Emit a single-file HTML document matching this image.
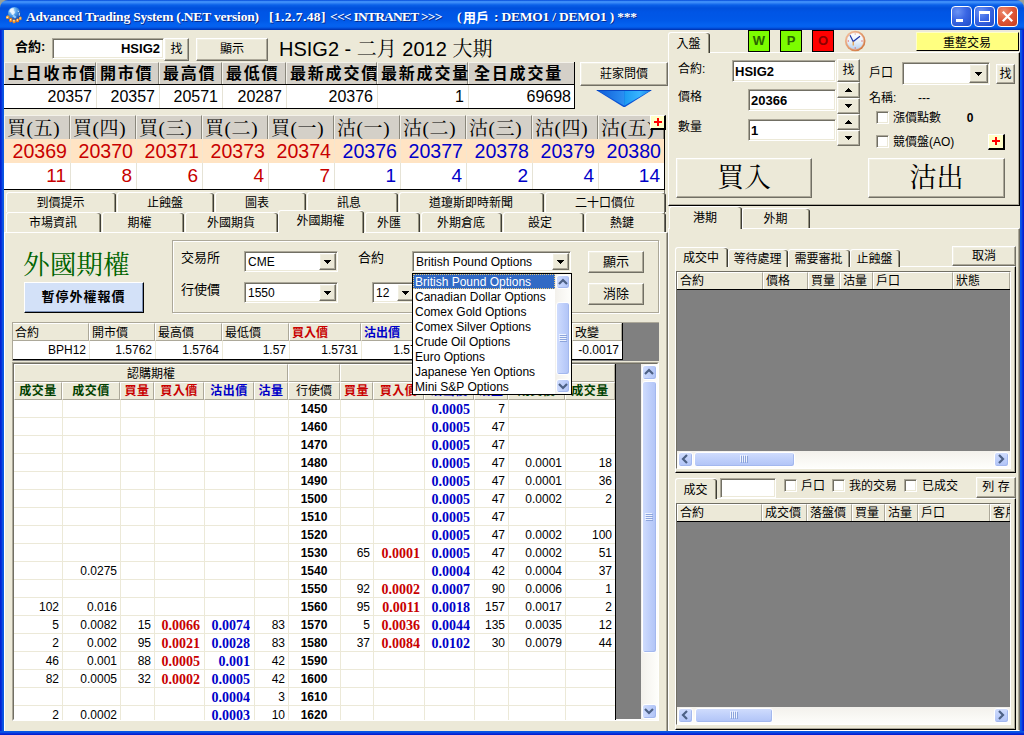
<!DOCTYPE html>
<html lang="zh-Hant"><head><meta charset="utf-8"><title>Advanced Trading System</title>
<style>
html,body{margin:0;padding:0;background:#98a098;}
body{width:1024px;height:735px;position:relative;overflow:hidden;font-family:"Liberation Sans","Noto Sans CJK TC",sans-serif;font-size:12px;color:#000;}
div{position:absolute;box-sizing:border-box;overflow:hidden;white-space:nowrap;}
.sf{font-family:"Liberation Serif","Noto Serif CJK SC",serif;}
.tt{overflow:visible}
</style></head>
<body>
<div class="tb" style="left:0px;top:0px;width:1024px;height:30px;background:linear-gradient(#0046d8 0,#3c8cf8 1.5px,#3c8cf8 2.5px,#0a60e8 5px,#0050dc 8px,#0055e5 12px,#0058e8 20px,#0462f0 25px,#0460ee 27px,#0040c8 29px,#0030a8 30px);border-radius:8px 8px 0 0;"></div>
<div style="left:0px;top:30px;width:4px;height:705px;background:linear-gradient(90deg,#0019cf,#0831d9 1.5px,#0a5be8 3px,#0855dd 4px);"></div>
<div style="left:1020px;top:30px;width:4px;height:705px;background:linear-gradient(90deg,#0855dd,#0a5be8 1px,#0831d9 2.5px,#0019cf 4px);"></div>
<div style="left:0px;top:731px;width:1024px;height:4px;background:linear-gradient(#0855dd,#0a5be8 1px,#0831d9 2.5px,#0019cf 4px);"></div>
<div style="left:4px;top:30px;width:1016px;height:701px;background:#ece9d8;"></div>
<svg style="position:absolute;left:26px;top:4px;overflow:visible" width="237" height="24"><g fill="#0a2a8a"><use href="#tt1" x="1" y="1"/></g><g fill="#fff"><text id="tt1" x="0" y="17" font-family="Liberation Serif,serif" font-weight="bold" font-size="13.5" xml:space="preserve" textLength="233" lengthAdjust="spacing">Advanced Trading System (.NET version)</text></g></svg>
<svg style="position:absolute;left:268.5px;top:4px;overflow:visible" width="60.5" height="24"><g fill="#0a2a8a"><use href="#tt2" x="1" y="1"/></g><g fill="#fff"><text id="tt2" x="0" y="17" font-family="Liberation Serif,serif" font-weight="bold" font-size="13.5" xml:space="preserve" textLength="56.5" lengthAdjust="spacing">[1.2.7.48]</text></g></svg>
<svg style="position:absolute;left:330px;top:4px;overflow:visible" width="116.5" height="24"><g fill="#0a2a8a"><use href="#tt3" x="1" y="1"/></g><g fill="#fff"><text id="tt3" x="0" y="17" font-family="Liberation Serif,serif" font-weight="bold" font-size="13.5" xml:space="preserve" textLength="112.5" lengthAdjust="spacing">&lt;&lt;&lt; INTRANET &gt;&gt;&gt;</text></g></svg>
<svg style="position:absolute;left:456.5px;top:4px;overflow:visible" width="24" height="24"><g fill="#0a2a8a"><use href="#tt4" x="1" y="1"/></g><g fill="#fff"><text id="tt4" x="0" y="17" font-family="Liberation Serif,serif" font-weight="bold" font-size="13.5" xml:space="preserve">(</text></g></svg>
<div class="tt b" style="left:463px;top:9px;width:40px;height:18px;font-size:13px;color:#fff;text-align:left;line-height:18px;font-weight:bold;">用戶</div>
<svg style="position:absolute;left:494px;top:4px;overflow:visible" width="147" height="24"><g fill="#0a2a8a"><use href="#tt5" x="1" y="1"/></g><g fill="#fff"><text id="tt5" x="0" y="17" font-family="Liberation Serif,serif" font-weight="bold" font-size="13.5" xml:space="preserve" textLength="143" lengthAdjust="spacing">: DEMO1 / DEMO1 ) ***</text></g></svg>
<svg style="position:absolute;left:5px;top:6px" width="18" height="18" viewBox="5 6 18 18">
<defs><radialGradient id="gl" cx=".35" cy=".3" r=".8"><stop offset="0" stop-color="#d8eeff"/><stop offset=".45" stop-color="#4f9ee8"/><stop offset="1" stop-color="#0a3fa8"/></radialGradient></defs>
<circle cx="14.3" cy="13.3" r="6.3" fill="url(#gl)"/>
<path d="M10 9.5q2-2 4-1l-.5 2 1.5 1.5-1 2.5-2 .5-1-2.5-1.5-.5zM17.5 10.5l1.2.3.3 1.2-1.2-.2zM19 12.5l.8 1-.2 2.4-.8-.6z" fill="#f4fbff" opacity=".9"/>
<path d="M13 14.5q2 .5 3.5 2.5l-1.5 1.5q-1.500-1.500-2.500-2z" fill="#9fd4ff" opacity=".9"/>
<path d="M6 16.500l1.500-1.200 1.700.6.300 2-1.500 1-2-.5z" fill="#f59a2a"/>
<path d="M9.200 18.400l1.800-.8 1.300 1.200-.3 3-2 .8-1-1.700z" fill="#ee7a14"/>
<path d="M12.500 19.800l1.700-.6 1.500 1-.2 2.600-2 .6-1.200-1.300z" fill="#f08a1c"/>
<path d="M16 19.400l1.600-1.200 1.400.8.200 2.400-1.700 1.200-1.500-.8z" fill="#ee7a14"/>
<path d="M19 17.400l1.300-1 1.200.7.100 2.300-1.400.8-1.200-.8z" fill="#f59a2a"/>
<path d="M6.500 16.800h1.500v1.200h-1.500zM10 19h1.300v1.600h-1.300zM13.300 20h1.300v1.500h-1.300zM16.800 19.300h1.200v1.500h-1.200zM19.700 17.500h1v1.300h-1z" fill="#fff0b0"/>
</svg>
<div style="left:951px;top:6px;width:21px;height:21px;background:radial-gradient(circle at 30% 25%,#6c94f4 0,#3a66e4 45%,#1f4cc8 100%);border:1px solid #fff;border-radius:4px;"></div>
<div style="left:956px;top:19px;width:7px;height:3px;background:#fff;"></div>
<div style="left:974px;top:6px;width:21px;height:21px;background:radial-gradient(circle at 30% 25%,#6c94f4 0,#3a66e4 45%,#1f4cc8 100%);border:1px solid #fff;border-radius:4px;"></div>
<div style="left:979px;top:11px;width:11px;height:11px;border:1px solid #fff;border-top:3px solid #fff;"></div>
<div style="left:997px;top:6px;width:21px;height:21px;background:radial-gradient(circle at 30% 25%,#ec8c70 0,#e0583a 45%,#c83c1c 100%);border:1px solid #fff;border-radius:4px;"></div>
<svg style="position:absolute;left:1001px;top:10px" width="13" height="13" viewBox="0 0 13 13"><path d="M1.800 1.800L11.200 11.200M11.200 1.800L1.800 11.200" stroke="#fff" stroke-width="2.300" fill="none"/></svg>
<div class="b" style="left:15px;top:37px;width:40px;height:20px;font-size:13px;color:#000;text-align:left;line-height:20px;font-weight:bold;">合約:</div>
<div style="left:52px;top:38px;width:112px;height:21px;background:#fff;border:1px solid;border-color:#aca899 #fff #fff #aca899;box-shadow:inset 1px 1px 0 #716f64, inset -1px -1px 0 #ece9d8;"><span class="b" style="position:absolute;right:3px;top:1px;line-height:18px;font-size:13px;font-weight:bold">HSIG2</span></div>
<div style="left:164px;top:38px;width:25px;height:23px;background:#ece9d8;border:1px solid;border-color:#fff #716f64 #716f64 #fff;box-shadow:inset -1px -1px 0 #aca899, inset 1px 1px 0 #f1efe2;font-size:12px;text-align:center;line-height:21px;">找</div>
<div style="left:196px;top:38px;width:72px;height:23px;background:#ece9d8;border:1px solid;border-color:#fff #716f64 #716f64 #fff;box-shadow:inset -1px -1px 0 #aca899, inset 1px 1px 0 #f1efe2;font-size:12px;text-align:center;line-height:21px;">顯示</div>
<div style="left:279px;top:35px;width:300px;height:28px;font-size:20px;color:#000;text-align:left;line-height:28px;">HSIG2 - <span class="sf">二月</span> 2012 <span class="sf">大期</span></div>
<div style="left:4px;top:62px;width:571px;height:22px;background:#d4d0c8;"></div>
<div style="left:4px;top:85px;width:571px;height:23px;background:#fff;"></div>
<div style="left:4px;top:62px;width:92px;height:22px;border-left:1px solid #f4f2ea;border-top:1px solid #f4f2ea;border-right:1px solid #8a877c;"></div>
<div class="b" style="left:8px;top:63px;width:88px;height:21px;font-size:16px;color:#000;text-align:left;line-height:22px;font-weight:bold;letter-spacing:1.8px;">上日收市價</div>
<div style="left:4px;top:85px;width:88px;height:23px;font-size:16px;color:#000;text-align:right;line-height:23px;">20357</div>
<div style="left:96px;top:62px;width:63px;height:22px;border-left:1px solid #f4f2ea;border-top:1px solid #f4f2ea;border-right:1px solid #8a877c;"></div>
<div class="b" style="left:100px;top:63px;width:59px;height:21px;font-size:16px;color:#000;text-align:left;line-height:22px;font-weight:bold;letter-spacing:1.8px;">開市價</div>
<div style="left:96px;top:85px;width:59px;height:23px;font-size:16px;color:#000;text-align:right;line-height:23px;">20357</div>
<div style="left:96px;top:85px;width:1px;height:23px;background:#e6e3d6;"></div>
<div style="left:159px;top:62px;width:63px;height:22px;border-left:1px solid #f4f2ea;border-top:1px solid #f4f2ea;border-right:1px solid #8a877c;"></div>
<div class="b" style="left:163px;top:63px;width:59px;height:21px;font-size:16px;color:#000;text-align:left;line-height:22px;font-weight:bold;letter-spacing:1.8px;">最高價</div>
<div style="left:159px;top:85px;width:59px;height:23px;font-size:16px;color:#000;text-align:right;line-height:23px;">20571</div>
<div style="left:159px;top:85px;width:1px;height:23px;background:#e6e3d6;"></div>
<div style="left:222px;top:62px;width:64px;height:22px;border-left:1px solid #f4f2ea;border-top:1px solid #f4f2ea;border-right:1px solid #8a877c;"></div>
<div class="b" style="left:226px;top:63px;width:60px;height:21px;font-size:16px;color:#000;text-align:left;line-height:22px;font-weight:bold;letter-spacing:1.8px;">最低價</div>
<div style="left:222px;top:85px;width:60px;height:23px;font-size:16px;color:#000;text-align:right;line-height:23px;">20287</div>
<div style="left:222px;top:85px;width:1px;height:23px;background:#e6e3d6;"></div>
<div style="left:286px;top:62px;width:91px;height:22px;border-left:1px solid #f4f2ea;border-top:1px solid #f4f2ea;border-right:1px solid #8a877c;"></div>
<div class="b" style="left:290px;top:63px;width:87px;height:21px;font-size:16px;color:#000;text-align:left;line-height:22px;font-weight:bold;letter-spacing:1.8px;">最新成交價</div>
<div style="left:286px;top:85px;width:87px;height:23px;font-size:16px;color:#000;text-align:right;line-height:23px;">20376</div>
<div style="left:286px;top:85px;width:1px;height:23px;background:#e6e3d6;"></div>
<div style="left:377px;top:62px;width:91px;height:22px;border-left:1px solid #f4f2ea;border-top:1px solid #f4f2ea;border-right:1px solid #8a877c;"></div>
<div class="b" style="left:381px;top:63px;width:87px;height:21px;font-size:16px;color:#000;text-align:left;line-height:22px;font-weight:bold;letter-spacing:1.8px;">最新成交量</div>
<div style="left:377px;top:85px;width:87px;height:23px;font-size:16px;color:#000;text-align:right;line-height:23px;">1</div>
<div style="left:377px;top:85px;width:1px;height:23px;background:#e6e3d6;"></div>
<div style="left:468px;top:62px;width:107px;height:22px;border-left:1px solid #f4f2ea;border-top:1px solid #f4f2ea;border-right:1px solid #8a877c;"></div>
<div class="b" style="left:474px;top:63px;width:103px;height:21px;font-size:16px;color:#000;text-align:left;line-height:22px;font-weight:bold;letter-spacing:1.8px;">全日成交量</div>
<div style="left:468px;top:85px;width:103px;height:23px;font-size:16px;color:#000;text-align:right;line-height:23px;">69698</div>
<div style="left:468px;top:85px;width:1px;height:23px;background:#e6e3d6;"></div>
<div style="left:4px;top:84px;width:571px;height:1px;background:#000;"></div>
<div style="left:4px;top:108px;width:571px;height:1px;background:#000;"></div>
<div style="left:574px;top:62px;width:1px;height:47px;background:#000;"></div>
<div style="left:580px;top:62px;width:88px;height:24px;background:#ece9d8;border:1px solid;border-color:#fff #716f64 #716f64 #fff;box-shadow:inset -1px -1px 0 #aca899, inset 1px 1px 0 #f1efe2;font-size:12px;text-align:center;line-height:22px;">莊家問價</div>
<svg style="position:absolute;left:595px;top:89px" width="58" height="19" viewBox="595 89 58 19">
<defs><linearGradient id="tg" x1="0" y1="0" x2="1" y2="0"><stop offset="0" stop-color="#0f5fd8"/><stop offset="1" stop-color="#2c8ff2"/></linearGradient>
<linearGradient id="th" x1="0" y1="0" x2="1" y2="0"><stop offset="0" stop-color="#1a9af2"/><stop offset=".6" stop-color="#38b4ff"/><stop offset="1" stop-color="#1c86ea"/></linearGradient></defs>
<path d="M596 90H652L625 107H623.500Z" fill="#0a52d4"/>
<path d="M598.500 91H624.300V105.800Z" fill="url(#tg)"/><path d="M624.300 91H649.800L624.300 105.800Z" fill="url(#th)"/>
<path d="M597 90.500H651" stroke="#0846c0" stroke-width="1"/>
</svg>
<div style="left:4px;top:115px;width:660px;height:24px;background:#d4d0c8;"></div>
<div style="left:4px;top:139px;width:660px;height:24px;background:#ffe4c4;"></div>
<div style="left:4px;top:163px;width:660px;height:26px;background:#fff;"></div>
<div style="left:4px;top:115px;width:66px;height:24px;border-left:1px solid #f4f2ea;border-top:1px solid #f4f2ea;border-right:1px solid #8a877c;"></div>
<div style="left:7px;top:116px;width:63px;height:24px;font-size:19px;color:#000;text-align:left;line-height:26px;font-family:'Liberation Serif','Noto Serif CJK SC',serif;letter-spacing:.6px;">買(五)</div>
<div style="left:4px;top:139px;width:63px;height:24px;font-size:19.6px;color:#c80000;text-align:right;line-height:24px;">20369</div>
<div style="left:4px;top:163px;width:62px;height:24px;font-size:19px;color:#c80000;text-align:right;line-height:25px;">11</div>
<div style="left:70px;top:115px;width:66px;height:24px;border-left:1px solid #f4f2ea;border-top:1px solid #f4f2ea;border-right:1px solid #8a877c;"></div>
<div style="left:73px;top:116px;width:63px;height:24px;font-size:19px;color:#000;text-align:left;line-height:26px;font-family:'Liberation Serif','Noto Serif CJK SC',serif;letter-spacing:.6px;">買(四)</div>
<div style="left:70px;top:139px;width:63px;height:24px;font-size:19.6px;color:#c80000;text-align:right;line-height:24px;">20370</div>
<div style="left:70px;top:163px;width:62px;height:24px;font-size:19px;color:#c80000;text-align:right;line-height:25px;">8</div>
<div style="left:70px;top:139px;width:1px;height:24px;background:#f4e6d0;"></div>
<div style="left:70px;top:163px;width:1px;height:26px;background:#e6e3d6;"></div>
<div style="left:136px;top:115px;width:66px;height:24px;border-left:1px solid #f4f2ea;border-top:1px solid #f4f2ea;border-right:1px solid #8a877c;"></div>
<div style="left:139px;top:116px;width:63px;height:24px;font-size:19px;color:#000;text-align:left;line-height:26px;font-family:'Liberation Serif','Noto Serif CJK SC',serif;letter-spacing:.6px;">買(三)</div>
<div style="left:136px;top:139px;width:63px;height:24px;font-size:19.6px;color:#c80000;text-align:right;line-height:24px;">20371</div>
<div style="left:136px;top:163px;width:62px;height:24px;font-size:19px;color:#c80000;text-align:right;line-height:25px;">6</div>
<div style="left:136px;top:139px;width:1px;height:24px;background:#f4e6d0;"></div>
<div style="left:136px;top:163px;width:1px;height:26px;background:#e6e3d6;"></div>
<div style="left:202px;top:115px;width:66px;height:24px;border-left:1px solid #f4f2ea;border-top:1px solid #f4f2ea;border-right:1px solid #8a877c;"></div>
<div style="left:205px;top:116px;width:63px;height:24px;font-size:19px;color:#000;text-align:left;line-height:26px;font-family:'Liberation Serif','Noto Serif CJK SC',serif;letter-spacing:.6px;">買(二)</div>
<div style="left:202px;top:139px;width:63px;height:24px;font-size:19.6px;color:#c80000;text-align:right;line-height:24px;">20373</div>
<div style="left:202px;top:163px;width:62px;height:24px;font-size:19px;color:#c80000;text-align:right;line-height:25px;">4</div>
<div style="left:202px;top:139px;width:1px;height:24px;background:#f4e6d0;"></div>
<div style="left:202px;top:163px;width:1px;height:26px;background:#e6e3d6;"></div>
<div style="left:268px;top:115px;width:66px;height:24px;border-left:1px solid #f4f2ea;border-top:1px solid #f4f2ea;border-right:1px solid #8a877c;"></div>
<div style="left:271px;top:116px;width:63px;height:24px;font-size:19px;color:#000;text-align:left;line-height:26px;font-family:'Liberation Serif','Noto Serif CJK SC',serif;letter-spacing:.6px;">買(一)</div>
<div style="left:268px;top:139px;width:63px;height:24px;font-size:19.6px;color:#c80000;text-align:right;line-height:24px;">20374</div>
<div style="left:268px;top:163px;width:62px;height:24px;font-size:19px;color:#c80000;text-align:right;line-height:25px;">7</div>
<div style="left:268px;top:139px;width:1px;height:24px;background:#f4e6d0;"></div>
<div style="left:268px;top:163px;width:1px;height:26px;background:#e6e3d6;"></div>
<div style="left:334px;top:115px;width:66px;height:24px;border-left:1px solid #f4f2ea;border-top:1px solid #f4f2ea;border-right:1px solid #8a877c;"></div>
<div style="left:337px;top:116px;width:63px;height:24px;font-size:19px;color:#000;text-align:left;line-height:26px;font-family:'Liberation Serif','Noto Serif CJK SC',serif;letter-spacing:.6px;">沽(一)</div>
<div style="left:334px;top:139px;width:63px;height:24px;font-size:19.6px;color:#0000c8;text-align:right;line-height:24px;">20376</div>
<div style="left:334px;top:163px;width:62px;height:24px;font-size:19px;color:#0000c8;text-align:right;line-height:25px;">1</div>
<div style="left:334px;top:139px;width:1px;height:24px;background:#f4e6d0;"></div>
<div style="left:334px;top:163px;width:1px;height:26px;background:#e6e3d6;"></div>
<div style="left:400px;top:115px;width:66px;height:24px;border-left:1px solid #f4f2ea;border-top:1px solid #f4f2ea;border-right:1px solid #8a877c;"></div>
<div style="left:403px;top:116px;width:63px;height:24px;font-size:19px;color:#000;text-align:left;line-height:26px;font-family:'Liberation Serif','Noto Serif CJK SC',serif;letter-spacing:.6px;">沽(二)</div>
<div style="left:400px;top:139px;width:63px;height:24px;font-size:19.6px;color:#0000c8;text-align:right;line-height:24px;">20377</div>
<div style="left:400px;top:163px;width:62px;height:24px;font-size:19px;color:#0000c8;text-align:right;line-height:25px;">4</div>
<div style="left:400px;top:139px;width:1px;height:24px;background:#f4e6d0;"></div>
<div style="left:400px;top:163px;width:1px;height:26px;background:#e6e3d6;"></div>
<div style="left:466px;top:115px;width:66px;height:24px;border-left:1px solid #f4f2ea;border-top:1px solid #f4f2ea;border-right:1px solid #8a877c;"></div>
<div style="left:469px;top:116px;width:63px;height:24px;font-size:19px;color:#000;text-align:left;line-height:26px;font-family:'Liberation Serif','Noto Serif CJK SC',serif;letter-spacing:.6px;">沽(三)</div>
<div style="left:466px;top:139px;width:63px;height:24px;font-size:19.6px;color:#0000c8;text-align:right;line-height:24px;">20378</div>
<div style="left:466px;top:163px;width:62px;height:24px;font-size:19px;color:#0000c8;text-align:right;line-height:25px;">2</div>
<div style="left:466px;top:139px;width:1px;height:24px;background:#f4e6d0;"></div>
<div style="left:466px;top:163px;width:1px;height:26px;background:#e6e3d6;"></div>
<div style="left:532px;top:115px;width:66px;height:24px;border-left:1px solid #f4f2ea;border-top:1px solid #f4f2ea;border-right:1px solid #8a877c;"></div>
<div style="left:535px;top:116px;width:63px;height:24px;font-size:19px;color:#000;text-align:left;line-height:26px;font-family:'Liberation Serif','Noto Serif CJK SC',serif;letter-spacing:.6px;">沽(四)</div>
<div style="left:532px;top:139px;width:63px;height:24px;font-size:19.6px;color:#0000c8;text-align:right;line-height:24px;">20379</div>
<div style="left:532px;top:163px;width:62px;height:24px;font-size:19px;color:#0000c8;text-align:right;line-height:25px;">4</div>
<div style="left:532px;top:139px;width:1px;height:24px;background:#f4e6d0;"></div>
<div style="left:532px;top:163px;width:1px;height:26px;background:#e6e3d6;"></div>
<div style="left:598px;top:115px;width:66px;height:24px;border-left:1px solid #f4f2ea;border-top:1px solid #f4f2ea;border-right:1px solid #8a877c;"></div>
<div style="left:601px;top:116px;width:63px;height:24px;font-size:19px;color:#000;text-align:left;line-height:26px;font-family:'Liberation Serif','Noto Serif CJK SC',serif;letter-spacing:.6px;">沽(五)</div>
<div style="left:598px;top:139px;width:63px;height:24px;font-size:19.6px;color:#0000c8;text-align:right;line-height:24px;">20380</div>
<div style="left:598px;top:163px;width:62px;height:24px;font-size:19px;color:#0000c8;text-align:right;line-height:25px;">14</div>
<div style="left:598px;top:139px;width:1px;height:24px;background:#f4e6d0;"></div>
<div style="left:598px;top:163px;width:1px;height:26px;background:#e6e3d6;"></div>
<div style="left:4px;top:189px;width:661px;height:1px;background:#000;"></div>
<div style="left:664px;top:115px;width:1px;height:75px;background:#000;"></div>
<div style="left:650px;top:115px;width:16px;height:15px;background:#ffffc8;border-right:2px solid #000;border-bottom:2px solid #000;border-top:1px solid #fff;border-left:1px solid #fff;"></div>
<div style="left:654px;top:121px;width:8px;height:2px;background:#f00;"></div>
<div style="left:657px;top:118px;width:2px;height:8px;background:#f00;"></div>
<div style="left:6px;top:192px;width:110px;height:20px;background:#ece9d8;border-left:1px solid #fff;border-top:1px solid #fff;border-radius:3px 3px 0 0;box-shadow:inset -1px 0 0 #3e3d36, inset -2px 0 0 #96937f;"></div>
<div style="left:6px;top:194px;width:109px;height:19px;font-size:12px;color:#000;text-align:center;line-height:19px;">到價提示</div>
<div style="left:117px;top:192px;width:97px;height:20px;background:#ece9d8;border-left:1px solid #fff;border-top:1px solid #fff;border-radius:3px 3px 0 0;box-shadow:inset -1px 0 0 #3e3d36, inset -2px 0 0 #96937f;"></div>
<div style="left:117px;top:194px;width:96px;height:19px;font-size:12px;color:#000;text-align:center;line-height:19px;">止蝕盤</div>
<div style="left:215px;top:192px;width:91px;height:20px;background:#ece9d8;border-left:1px solid #fff;border-top:1px solid #fff;border-radius:3px 3px 0 0;box-shadow:inset -1px 0 0 #3e3d36, inset -2px 0 0 #96937f;"></div>
<div style="left:212px;top:194px;width:90px;height:19px;font-size:12px;color:#000;text-align:center;line-height:19px;">圖表</div>
<div style="left:307px;top:192px;width:91px;height:20px;background:#ece9d8;border-left:1px solid #fff;border-top:1px solid #fff;border-radius:3px 3px 0 0;box-shadow:inset -1px 0 0 #3e3d36, inset -2px 0 0 #96937f;"></div>
<div style="left:304px;top:194px;width:90px;height:19px;font-size:12px;color:#000;text-align:center;line-height:19px;">訊息</div>
<div style="left:399px;top:192px;width:145px;height:20px;background:#ece9d8;border-left:1px solid #fff;border-top:1px solid #fff;border-radius:3px 3px 0 0;box-shadow:inset -1px 0 0 #3e3d36, inset -2px 0 0 #96937f;"></div>
<div style="left:399px;top:194px;width:144px;height:19px;font-size:12px;color:#000;text-align:center;line-height:19px;">道瓊斯即時新聞</div>
<div style="left:545px;top:192px;width:121px;height:20px;background:#ece9d8;border-left:1px solid #fff;border-top:1px solid #fff;border-radius:3px 3px 0 0;box-shadow:inset -1px 0 0 #3e3d36, inset -2px 0 0 #96937f;"></div>
<div style="left:545px;top:194px;width:120px;height:19px;font-size:12px;color:#000;text-align:center;line-height:19px;">二十口價位</div>
<div style="left:4px;top:232px;width:664px;height:499px;border-top:1px solid #fff;border-left:1px solid #fff;border-right:1px solid #716f64;box-shadow:inset -1px 0 0 #aca899;"></div>
<div style="left:6px;top:212px;width:95px;height:20px;background:#ece9d8;border-left:1px solid #fff;border-top:1px solid #fff;border-radius:3px 3px 0 0;box-shadow:inset -1px 0 0 #3e3d36, inset -2px 0 0 #96937f;"></div>
<div style="left:6px;top:214px;width:94px;height:19px;font-size:12px;color:#000;text-align:center;line-height:19px;">市場資訊</div>
<div style="left:102px;top:212px;width:82px;height:20px;background:#ece9d8;border-left:1px solid #fff;border-top:1px solid #fff;border-radius:3px 3px 0 0;box-shadow:inset -1px 0 0 #3e3d36, inset -2px 0 0 #96937f;"></div>
<div style="left:99px;top:214px;width:81px;height:19px;font-size:12px;color:#000;text-align:center;line-height:19px;">期權</div>
<div style="left:185px;top:212px;width:93px;height:20px;background:#ece9d8;border-left:1px solid #fff;border-top:1px solid #fff;border-radius:3px 3px 0 0;box-shadow:inset -1px 0 0 #3e3d36, inset -2px 0 0 #96937f;"></div>
<div style="left:185px;top:214px;width:92px;height:19px;font-size:12px;color:#000;text-align:center;line-height:19px;">外國期貨</div>
<div style="left:365px;top:212px;width:55px;height:20px;background:#ece9d8;border-left:1px solid #fff;border-top:1px solid #fff;border-radius:3px 3px 0 0;box-shadow:inset -1px 0 0 #3e3d36, inset -2px 0 0 #96937f;"></div>
<div style="left:362px;top:214px;width:54px;height:19px;font-size:12px;color:#000;text-align:center;line-height:19px;">外匯</div>
<div style="left:421px;top:212px;width:81px;height:20px;background:#ece9d8;border-left:1px solid #fff;border-top:1px solid #fff;border-radius:3px 3px 0 0;box-shadow:inset -1px 0 0 #3e3d36, inset -2px 0 0 #96937f;"></div>
<div style="left:421px;top:214px;width:80px;height:19px;font-size:12px;color:#000;text-align:center;line-height:19px;">外期倉底</div>
<div style="left:503px;top:212px;width:81px;height:20px;background:#ece9d8;border-left:1px solid #fff;border-top:1px solid #fff;border-radius:3px 3px 0 0;box-shadow:inset -1px 0 0 #3e3d36, inset -2px 0 0 #96937f;"></div>
<div style="left:500px;top:214px;width:80px;height:19px;font-size:12px;color:#000;text-align:center;line-height:19px;">設定</div>
<div style="left:585px;top:212px;width:81px;height:20px;background:#ece9d8;border-left:1px solid #fff;border-top:1px solid #fff;border-radius:3px 3px 0 0;box-shadow:inset -1px 0 0 #3e3d36, inset -2px 0 0 #96937f;"></div>
<div style="left:582px;top:214px;width:80px;height:19px;font-size:12px;color:#000;text-align:center;line-height:19px;">熱鍵</div>
<div style="left:278px;top:210px;width:86px;height:23px;background:#ece9d8;border-left:1px solid #fff;border-top:1px solid #fff;border-radius:3px 3px 0 0;box-shadow:inset -1px 0 0 #3e3d36, inset -2px 0 0 #96937f;"></div>
<div style="left:278px;top:210px;width:85px;height:22px;font-size:12px;color:#000;text-align:center;line-height:22px;">外國期權</div>
<div style="left:23px;top:249px;width:120px;height:32px;font-size:26.7px;color:#006400;text-align:left;line-height:32px;"><span class="sf">外國期權</span></div>
<div style="left:24px;top:282px;width:120px;height:31px;background:#d3e1f8;border:1px solid;border-color:#fff #000 #000 #fff;box-shadow:inset -1px -1px 0 #7b8fb5;"></div>
<div class="b" style="left:24px;top:282px;width:119px;height:30px;font-size:13px;color:#000;text-align:center;line-height:30px;font-weight:bold;letter-spacing:1px;">暫停外權報價</div>
<div style="left:172px;top:240px;width:487px;height:73px;border:1px solid #aca899;box-shadow:1px 1px 0 #fff, inset 1px 1px 0 #fff;"></div>
<div style="left:181px;top:249px;width:60px;height:18px;font-size:13px;color:#000;text-align:left;line-height:18px;">交易所</div>
<div style="left:181px;top:281px;width:60px;height:18px;font-size:13px;color:#000;text-align:left;line-height:18px;">行使價</div>
<div style="left:244px;top:251px;width:94px;height:21px;background:#fff;border:1px solid;border-color:#aca899 #fff #fff #aca899;box-shadow:inset 1px 1px 0 #716f64, inset -1px -1px 0 #ece9d8;"><span style="position:absolute;left:3px;top:1px;line-height:18px;font-size:12px">CME</span></div>
<div style="left:319px;top:253px;width:17px;height:17px;background:#ece9d8;border:1px solid;border-color:#fff #716f64 #716f64 #fff;box-shadow:inset -1px -1px 0 #aca899, inset 1px 1px 0 #f1efe2;font-size:12px;text-align:center;line-height:15px;"></div>
<svg style="position:absolute;left:324px;top:260px" width="7" height="4" shape-rendering="crispEdges"><path d="M0 0H7L3.5 4Z" fill="#000"/></svg>
<div style="left:244px;top:282px;width:94px;height:21px;background:#fff;border:1px solid;border-color:#aca899 #fff #fff #aca899;box-shadow:inset 1px 1px 0 #716f64, inset -1px -1px 0 #ece9d8;"><span style="position:absolute;left:3px;top:1px;line-height:18px;font-size:12px">1550</span></div>
<div style="left:319px;top:284px;width:17px;height:17px;background:#ece9d8;border:1px solid;border-color:#fff #716f64 #716f64 #fff;box-shadow:inset -1px -1px 0 #aca899, inset 1px 1px 0 #f1efe2;font-size:12px;text-align:center;line-height:15px;"></div>
<svg style="position:absolute;left:324px;top:291px" width="7" height="4" shape-rendering="crispEdges"><path d="M0 0H7L3.5 4Z" fill="#000"/></svg>
<div style="left:358px;top:249px;width:40px;height:18px;font-size:13px;color:#000;text-align:left;line-height:18px;">合約</div>
<div style="left:372px;top:282px;width:44px;height:21px;background:#fff;border:1px solid;border-color:#aca899 #fff #fff #aca899;box-shadow:inset 1px 1px 0 #716f64, inset -1px -1px 0 #ece9d8;"><span style="position:absolute;left:3px;top:1px;line-height:18px;font-size:12px">12</span></div>
<div style="left:397px;top:284px;width:17px;height:17px;background:#ece9d8;border:1px solid;border-color:#fff #716f64 #716f64 #fff;box-shadow:inset -1px -1px 0 #aca899, inset 1px 1px 0 #f1efe2;font-size:12px;text-align:center;line-height:15px;"></div>
<svg style="position:absolute;left:402px;top:291px" width="7" height="4" shape-rendering="crispEdges"><path d="M0 0H7L3.5 4Z" fill="#000"/></svg>
<div style="left:412px;top:251px;width:159px;height:21px;background:#fff;border:1px solid;border-color:#aca899 #fff #fff #aca899;box-shadow:inset 1px 1px 0 #716f64, inset -1px -1px 0 #ece9d8;"><span style="position:absolute;left:3px;top:1px;line-height:18px;font-size:12px">British Pound Options</span></div>
<div style="left:552px;top:253px;width:17px;height:17px;background:#ece9d8;border:1px solid;border-color:#fff #716f64 #716f64 #fff;box-shadow:inset -1px -1px 0 #aca899, inset 1px 1px 0 #f1efe2;font-size:12px;text-align:center;line-height:15px;"></div>
<svg style="position:absolute;left:557px;top:260px" width="7" height="4" shape-rendering="crispEdges"><path d="M0 0H7L3.5 4Z" fill="#000"/></svg>
<div style="left:588px;top:251px;width:56px;height:22px;background:#ece9d8;border:1px solid;border-color:#fff #716f64 #716f64 #fff;box-shadow:inset -1px -1px 0 #aca899, inset 1px 1px 0 #f1efe2;font-size:13px;text-align:center;line-height:20px;">顯示</div>
<div style="left:588px;top:283px;width:56px;height:22px;background:#ece9d8;border:1px solid;border-color:#fff #716f64 #716f64 #fff;box-shadow:inset -1px -1px 0 #aca899, inset 1px 1px 0 #f1efe2;font-size:13px;text-align:center;line-height:20px;">消除</div>
<div style="left:12px;top:322px;width:647px;height:39px;background:#808080;"></div>
<div style="left:12px;top:323px;width:610px;height:18px;background:#ece9d8;"></div>
<div style="left:12px;top:341px;width:610px;height:18px;background:#fff;"></div>
<div style="left:12px;top:323px;width:77px;height:18px;border-left:1px solid #fff;border-top:1px solid #fff;border-right:1px solid #aca899;border-bottom:1px solid #aca899;"></div>
<div style="left:15px;top:324px;width:74px;height:17px;font-size:12px;color:#000;text-align:left;line-height:18px;">合約</div>
<div style="left:12px;top:341px;width:74px;height:18px;font-size:12px;color:#000;text-align:right;line-height:19px;">BPH12</div>
<div style="left:89px;top:323px;width:66px;height:18px;border-left:1px solid #fff;border-top:1px solid #fff;border-right:1px solid #aca899;border-bottom:1px solid #aca899;"></div>
<div style="left:92px;top:324px;width:63px;height:17px;font-size:12px;color:#000;text-align:left;line-height:18px;">開市價</div>
<div style="left:89px;top:341px;width:63px;height:18px;font-size:12px;color:#000;text-align:right;line-height:19px;">1.5762</div>
<div style="left:89px;top:341px;width:1px;height:18px;background:#ece9d8;"></div>
<div style="left:155px;top:323px;width:67px;height:18px;border-left:1px solid #fff;border-top:1px solid #fff;border-right:1px solid #aca899;border-bottom:1px solid #aca899;"></div>
<div style="left:158px;top:324px;width:64px;height:17px;font-size:12px;color:#000;text-align:left;line-height:18px;">最高價</div>
<div style="left:155px;top:341px;width:64px;height:18px;font-size:12px;color:#000;text-align:right;line-height:19px;">1.5764</div>
<div style="left:155px;top:341px;width:1px;height:18px;background:#ece9d8;"></div>
<div style="left:222px;top:323px;width:67px;height:18px;border-left:1px solid #fff;border-top:1px solid #fff;border-right:1px solid #aca899;border-bottom:1px solid #aca899;"></div>
<div style="left:225px;top:324px;width:64px;height:17px;font-size:12px;color:#000;text-align:left;line-height:18px;">最低價</div>
<div style="left:222px;top:341px;width:64px;height:18px;font-size:12px;color:#000;text-align:right;line-height:19px;">1.57</div>
<div style="left:222px;top:341px;width:1px;height:18px;background:#ece9d8;"></div>
<div style="left:289px;top:323px;width:72px;height:18px;border-left:1px solid #fff;border-top:1px solid #fff;border-right:1px solid #aca899;border-bottom:1px solid #aca899;"></div>
<div class="b" style="left:292px;top:324px;width:69px;height:17px;font-size:12px;color:#c80000;text-align:left;line-height:18px;font-weight:bold;">買入價</div>
<div style="left:289px;top:341px;width:69px;height:18px;font-size:12px;color:#000;text-align:right;line-height:19px;">1.5731</div>
<div style="left:289px;top:341px;width:1px;height:18px;background:#ece9d8;"></div>
<div style="left:361px;top:323px;width:72px;height:18px;border-left:1px solid #fff;border-top:1px solid #fff;border-right:1px solid #aca899;border-bottom:1px solid #aca899;"></div>
<div class="b" style="left:364px;top:324px;width:69px;height:17px;font-size:12px;color:#0000c8;text-align:left;line-height:18px;font-weight:bold;">沽出價</div>
<div style="left:361px;top:341px;width:69px;height:18px;font-size:12px;color:#000;text-align:right;line-height:19px;">1.5748</div>
<div style="left:361px;top:341px;width:1px;height:18px;background:#ece9d8;"></div>
<div style="left:433px;top:323px;width:72px;height:18px;border-left:1px solid #fff;border-top:1px solid #fff;border-right:1px solid #aca899;border-bottom:1px solid #aca899;"></div>
<div style="left:436px;top:324px;width:69px;height:17px;font-size:12px;color:#000;text-align:left;line-height:18px;"></div>
<div style="left:433px;top:341px;width:69px;height:18px;font-size:12px;color:#000;text-align:right;line-height:19px;"></div>
<div style="left:433px;top:341px;width:1px;height:18px;background:#ece9d8;"></div>
<div style="left:505px;top:323px;width:67px;height:18px;border-left:1px solid #fff;border-top:1px solid #fff;border-right:1px solid #aca899;border-bottom:1px solid #aca899;"></div>
<div style="left:508px;top:324px;width:64px;height:17px;font-size:12px;color:#000;text-align:left;line-height:18px;"></div>
<div style="left:505px;top:341px;width:64px;height:18px;font-size:12px;color:#000;text-align:right;line-height:19px;"></div>
<div style="left:505px;top:341px;width:1px;height:18px;background:#ece9d8;"></div>
<div style="left:572px;top:323px;width:50px;height:18px;border-left:1px solid #fff;border-top:1px solid #fff;border-right:1px solid #aca899;border-bottom:1px solid #aca899;"></div>
<div style="left:575px;top:324px;width:47px;height:17px;font-size:12px;color:#000;text-align:left;line-height:18px;">改變</div>
<div style="left:572px;top:341px;width:47px;height:18px;font-size:12px;color:#000;text-align:right;line-height:19px;">-0.0017</div>
<div style="left:572px;top:341px;width:1px;height:18px;background:#ece9d8;"></div>
<div style="left:12px;top:359px;width:611px;height:1px;background:#000;"></div>
<div style="left:622px;top:323px;width:1px;height:37px;background:#000;"></div>
<div style="left:12px;top:322px;width:1px;height:39px;background:#aca899;"></div>
<div style="left:12px;top:322px;width:647px;height:1px;background:#aca899;"></div>
<div style="left:12px;top:362px;width:647px;height:359px;background:#808080;border:1px solid;border-color:#aca899 #fff #fff #aca899;"></div>
<div style="left:13px;top:363px;width:645px;height:357px;border:1px solid;border-color:#716f64 #ece9d8 #fff #716f64;background:#808080;"></div>
<div style="left:14px;top:364px;width:601px;height:356px;background:#fff;"></div>
<div style="left:14px;top:364px;width:601px;height:36px;background:#ece9d8;"></div>
<div style="left:14px;top:364px;width:274px;height:18px;border-left:1px solid #fff;border-top:1px solid #fff;border-right:1px solid #aca899;border-bottom:1px solid #aca899;"></div>
<div style="left:288px;top:364px;width:52px;height:18px;border-left:1px solid #fff;border-top:1px solid #fff;border-right:1px solid #aca899;border-bottom:1px solid #aca899;"></div>
<div style="left:340px;top:364px;width:275px;height:18px;border-left:1px solid #fff;border-top:1px solid #fff;border-right:1px solid #aca899;border-bottom:1px solid #aca899;"></div>
<div style="left:14px;top:365px;width:274px;height:17px;font-size:12px;color:#000;text-align:center;line-height:18px;">認購期權</div>
<div style="left:14px;top:382px;width:48px;height:18px;border-left:1px solid #fff;border-top:1px solid #fff;border-right:1px solid #aca899;border-bottom:1px solid #aca899;"></div>
<div class="b" style="left:14px;top:382px;width:48px;height:18px;font-size:12px;color:#004000;text-align:center;line-height:18px;font-weight:bold;letter-spacing:.5px;">成交量</div>
<div style="left:62px;top:382px;width:58px;height:18px;border-left:1px solid #fff;border-top:1px solid #fff;border-right:1px solid #aca899;border-bottom:1px solid #aca899;"></div>
<div class="b" style="left:62px;top:382px;width:58px;height:18px;font-size:12px;color:#004000;text-align:center;line-height:18px;font-weight:bold;letter-spacing:.5px;">成交價</div>
<div style="left:120px;top:382px;width:34px;height:18px;border-left:1px solid #fff;border-top:1px solid #fff;border-right:1px solid #aca899;border-bottom:1px solid #aca899;"></div>
<div class="b" style="left:120px;top:382px;width:34px;height:18px;font-size:12px;color:#c80000;text-align:center;line-height:18px;font-weight:bold;letter-spacing:.5px;">買量</div>
<div style="left:154px;top:382px;width:50px;height:18px;border-left:1px solid #fff;border-top:1px solid #fff;border-right:1px solid #aca899;border-bottom:1px solid #aca899;"></div>
<div class="b" style="left:154px;top:382px;width:50px;height:18px;font-size:12px;color:#c80000;text-align:center;line-height:18px;font-weight:bold;letter-spacing:.5px;">買入價</div>
<div style="left:204px;top:382px;width:50px;height:18px;border-left:1px solid #fff;border-top:1px solid #fff;border-right:1px solid #aca899;border-bottom:1px solid #aca899;"></div>
<div class="b" style="left:204px;top:382px;width:50px;height:18px;font-size:12px;color:#0000c8;text-align:center;line-height:18px;font-weight:bold;letter-spacing:.5px;">沽出價</div>
<div style="left:254px;top:382px;width:34px;height:18px;border-left:1px solid #fff;border-top:1px solid #fff;border-right:1px solid #aca899;border-bottom:1px solid #aca899;"></div>
<div class="b" style="left:254px;top:382px;width:34px;height:18px;font-size:12px;color:#0000c8;text-align:center;line-height:18px;font-weight:bold;letter-spacing:.5px;">沽量</div>
<div style="left:288px;top:382px;width:52px;height:18px;border-left:1px solid #fff;border-top:1px solid #fff;border-right:1px solid #aca899;border-bottom:1px solid #aca899;"></div>
<div style="left:288px;top:382px;width:52px;height:18px;font-size:12px;color:#000;text-align:center;line-height:18px;">行使價</div>
<div style="left:340px;top:382px;width:33px;height:18px;border-left:1px solid #fff;border-top:1px solid #fff;border-right:1px solid #aca899;border-bottom:1px solid #aca899;"></div>
<div class="b" style="left:340px;top:382px;width:33px;height:18px;font-size:12px;color:#c80000;text-align:center;line-height:18px;font-weight:bold;letter-spacing:.5px;">買量</div>
<div style="left:373px;top:382px;width:51px;height:18px;border-left:1px solid #fff;border-top:1px solid #fff;border-right:1px solid #aca899;border-bottom:1px solid #aca899;"></div>
<div class="b" style="left:373px;top:382px;width:51px;height:18px;font-size:12px;color:#c80000;text-align:center;line-height:18px;font-weight:bold;letter-spacing:.5px;">買入價</div>
<div style="left:424px;top:382px;width:50px;height:18px;border-left:1px solid #fff;border-top:1px solid #fff;border-right:1px solid #aca899;border-bottom:1px solid #aca899;"></div>
<div class="b" style="left:424px;top:382px;width:50px;height:18px;font-size:12px;color:#0000c8;text-align:center;line-height:18px;font-weight:bold;letter-spacing:.5px;">沽出價</div>
<div style="left:474px;top:382px;width:34px;height:18px;border-left:1px solid #fff;border-top:1px solid #fff;border-right:1px solid #aca899;border-bottom:1px solid #aca899;"></div>
<div class="b" style="left:474px;top:382px;width:34px;height:18px;font-size:12px;color:#0000c8;text-align:center;line-height:18px;font-weight:bold;letter-spacing:.5px;">沽量</div>
<div style="left:508px;top:382px;width:57px;height:18px;border-left:1px solid #fff;border-top:1px solid #fff;border-right:1px solid #aca899;border-bottom:1px solid #aca899;"></div>
<div class="b" style="left:508px;top:382px;width:57px;height:18px;font-size:12px;color:#004000;text-align:center;line-height:18px;font-weight:bold;letter-spacing:.5px;">成交價</div>
<div style="left:565px;top:382px;width:50px;height:18px;border-left:1px solid #fff;border-top:1px solid #fff;border-right:1px solid #aca899;border-bottom:1px solid #aca899;"></div>
<div class="b" style="left:565px;top:382px;width:50px;height:18px;font-size:12px;color:#004000;text-align:center;line-height:18px;font-weight:bold;letter-spacing:.5px;">成交量</div>
<div style="left:62px;top:400px;width:1px;height:320px;background:#ece9d8;"></div>
<div style="left:120px;top:400px;width:1px;height:320px;background:#ece9d8;"></div>
<div style="left:154px;top:400px;width:1px;height:320px;background:#ece9d8;"></div>
<div style="left:204px;top:400px;width:1px;height:320px;background:#ece9d8;"></div>
<div style="left:254px;top:400px;width:1px;height:320px;background:#ece9d8;"></div>
<div style="left:288px;top:400px;width:1px;height:320px;background:#ece9d8;"></div>
<div style="left:340px;top:400px;width:1px;height:320px;background:#ece9d8;"></div>
<div style="left:373px;top:400px;width:1px;height:320px;background:#ece9d8;"></div>
<div style="left:424px;top:400px;width:1px;height:320px;background:#ece9d8;"></div>
<div style="left:474px;top:400px;width:1px;height:320px;background:#ece9d8;"></div>
<div style="left:508px;top:400px;width:1px;height:320px;background:#ece9d8;"></div>
<div style="left:565px;top:400px;width:1px;height:320px;background:#ece9d8;"></div>
<div style="left:14px;top:417px;width:601px;height:1px;background:#ece9d8;"></div>
<div style="left:14px;top:435px;width:601px;height:1px;background:#ece9d8;"></div>
<div style="left:14px;top:453px;width:601px;height:1px;background:#ece9d8;"></div>
<div style="left:14px;top:471px;width:601px;height:1px;background:#ece9d8;"></div>
<div style="left:14px;top:489px;width:601px;height:1px;background:#ece9d8;"></div>
<div style="left:14px;top:507px;width:601px;height:1px;background:#ece9d8;"></div>
<div style="left:14px;top:525px;width:601px;height:1px;background:#ece9d8;"></div>
<div style="left:14px;top:543px;width:601px;height:1px;background:#ece9d8;"></div>
<div style="left:14px;top:561px;width:601px;height:1px;background:#ece9d8;"></div>
<div style="left:14px;top:579px;width:601px;height:1px;background:#ece9d8;"></div>
<div style="left:14px;top:597px;width:601px;height:1px;background:#ece9d8;"></div>
<div style="left:14px;top:615px;width:601px;height:1px;background:#ece9d8;"></div>
<div style="left:14px;top:633px;width:601px;height:1px;background:#ece9d8;"></div>
<div style="left:14px;top:651px;width:601px;height:1px;background:#ece9d8;"></div>
<div style="left:14px;top:669px;width:601px;height:1px;background:#ece9d8;"></div>
<div style="left:14px;top:687px;width:601px;height:1px;background:#ece9d8;"></div>
<div style="left:14px;top:705px;width:601px;height:1px;background:#ece9d8;"></div>
<div style="left:14px;top:723px;width:601px;height:1px;background:#ece9d8;"></div>
<div class="b" style="left:288px;top:400px;width:52px;height:18px;font-size:12px;color:#000;text-align:center;line-height:19px;font-weight:bold;">1450</div>
<div class="b" style="left:424px;top:400px;width:46px;height:18px;font-size:14px;color:#0000c8;text-align:right;line-height:19px;font-weight:bold;font-family:'Liberation Serif',serif;">0.0005</div>
<div style="left:474px;top:400px;width:31px;height:18px;font-size:12px;color:#000;text-align:right;line-height:19px;">7</div>
<div class="b" style="left:288px;top:418px;width:52px;height:18px;font-size:12px;color:#000;text-align:center;line-height:19px;font-weight:bold;">1460</div>
<div class="b" style="left:424px;top:418px;width:46px;height:18px;font-size:14px;color:#0000c8;text-align:right;line-height:19px;font-weight:bold;font-family:'Liberation Serif',serif;">0.0005</div>
<div style="left:474px;top:418px;width:31px;height:18px;font-size:12px;color:#000;text-align:right;line-height:19px;">47</div>
<div class="b" style="left:288px;top:436px;width:52px;height:18px;font-size:12px;color:#000;text-align:center;line-height:19px;font-weight:bold;">1470</div>
<div class="b" style="left:424px;top:436px;width:46px;height:18px;font-size:14px;color:#0000c8;text-align:right;line-height:19px;font-weight:bold;font-family:'Liberation Serif',serif;">0.0005</div>
<div style="left:474px;top:436px;width:31px;height:18px;font-size:12px;color:#000;text-align:right;line-height:19px;">47</div>
<div class="b" style="left:288px;top:454px;width:52px;height:18px;font-size:12px;color:#000;text-align:center;line-height:19px;font-weight:bold;">1480</div>
<div class="b" style="left:424px;top:454px;width:46px;height:18px;font-size:14px;color:#0000c8;text-align:right;line-height:19px;font-weight:bold;font-family:'Liberation Serif',serif;">0.0005</div>
<div style="left:474px;top:454px;width:31px;height:18px;font-size:12px;color:#000;text-align:right;line-height:19px;">47</div>
<div style="left:508px;top:454px;width:54px;height:18px;font-size:12px;color:#000;text-align:right;line-height:19px;">0.0001</div>
<div style="left:565px;top:454px;width:47px;height:18px;font-size:12px;color:#000;text-align:right;line-height:19px;">18</div>
<div class="b" style="left:288px;top:472px;width:52px;height:18px;font-size:12px;color:#000;text-align:center;line-height:19px;font-weight:bold;">1490</div>
<div class="b" style="left:424px;top:472px;width:46px;height:18px;font-size:14px;color:#0000c8;text-align:right;line-height:19px;font-weight:bold;font-family:'Liberation Serif',serif;">0.0005</div>
<div style="left:474px;top:472px;width:31px;height:18px;font-size:12px;color:#000;text-align:right;line-height:19px;">47</div>
<div style="left:508px;top:472px;width:54px;height:18px;font-size:12px;color:#000;text-align:right;line-height:19px;">0.0001</div>
<div style="left:565px;top:472px;width:47px;height:18px;font-size:12px;color:#000;text-align:right;line-height:19px;">36</div>
<div class="b" style="left:288px;top:490px;width:52px;height:18px;font-size:12px;color:#000;text-align:center;line-height:19px;font-weight:bold;">1500</div>
<div class="b" style="left:424px;top:490px;width:46px;height:18px;font-size:14px;color:#0000c8;text-align:right;line-height:19px;font-weight:bold;font-family:'Liberation Serif',serif;">0.0005</div>
<div style="left:474px;top:490px;width:31px;height:18px;font-size:12px;color:#000;text-align:right;line-height:19px;">47</div>
<div style="left:508px;top:490px;width:54px;height:18px;font-size:12px;color:#000;text-align:right;line-height:19px;">0.0002</div>
<div style="left:565px;top:490px;width:47px;height:18px;font-size:12px;color:#000;text-align:right;line-height:19px;">2</div>
<div class="b" style="left:288px;top:508px;width:52px;height:18px;font-size:12px;color:#000;text-align:center;line-height:19px;font-weight:bold;">1510</div>
<div class="b" style="left:424px;top:508px;width:46px;height:18px;font-size:14px;color:#0000c8;text-align:right;line-height:19px;font-weight:bold;font-family:'Liberation Serif',serif;">0.0005</div>
<div style="left:474px;top:508px;width:31px;height:18px;font-size:12px;color:#000;text-align:right;line-height:19px;">47</div>
<div class="b" style="left:288px;top:526px;width:52px;height:18px;font-size:12px;color:#000;text-align:center;line-height:19px;font-weight:bold;">1520</div>
<div class="b" style="left:424px;top:526px;width:46px;height:18px;font-size:14px;color:#0000c8;text-align:right;line-height:19px;font-weight:bold;font-family:'Liberation Serif',serif;">0.0005</div>
<div style="left:474px;top:526px;width:31px;height:18px;font-size:12px;color:#000;text-align:right;line-height:19px;">47</div>
<div style="left:508px;top:526px;width:54px;height:18px;font-size:12px;color:#000;text-align:right;line-height:19px;">0.0002</div>
<div style="left:565px;top:526px;width:47px;height:18px;font-size:12px;color:#000;text-align:right;line-height:19px;">100</div>
<div class="b" style="left:288px;top:544px;width:52px;height:18px;font-size:12px;color:#000;text-align:center;line-height:19px;font-weight:bold;">1530</div>
<div style="left:340px;top:544px;width:30px;height:18px;font-size:12px;color:#000;text-align:right;line-height:19px;">65</div>
<div class="b" style="left:373px;top:544px;width:47px;height:18px;font-size:14px;color:#c80000;text-align:right;line-height:19px;font-weight:bold;font-family:'Liberation Serif',serif;">0.0001</div>
<div class="b" style="left:424px;top:544px;width:46px;height:18px;font-size:14px;color:#0000c8;text-align:right;line-height:19px;font-weight:bold;font-family:'Liberation Serif',serif;">0.0005</div>
<div style="left:474px;top:544px;width:31px;height:18px;font-size:12px;color:#000;text-align:right;line-height:19px;">47</div>
<div style="left:508px;top:544px;width:54px;height:18px;font-size:12px;color:#000;text-align:right;line-height:19px;">0.0002</div>
<div style="left:565px;top:544px;width:47px;height:18px;font-size:12px;color:#000;text-align:right;line-height:19px;">51</div>
<div style="left:62px;top:562px;width:55px;height:18px;font-size:12px;color:#000;text-align:right;line-height:19px;">0.0275</div>
<div class="b" style="left:288px;top:562px;width:52px;height:18px;font-size:12px;color:#000;text-align:center;line-height:19px;font-weight:bold;">1540</div>
<div class="b" style="left:424px;top:562px;width:46px;height:18px;font-size:14px;color:#0000c8;text-align:right;line-height:19px;font-weight:bold;font-family:'Liberation Serif',serif;">0.0004</div>
<div style="left:474px;top:562px;width:31px;height:18px;font-size:12px;color:#000;text-align:right;line-height:19px;">42</div>
<div style="left:508px;top:562px;width:54px;height:18px;font-size:12px;color:#000;text-align:right;line-height:19px;">0.0004</div>
<div style="left:565px;top:562px;width:47px;height:18px;font-size:12px;color:#000;text-align:right;line-height:19px;">37</div>
<div class="b" style="left:288px;top:580px;width:52px;height:18px;font-size:12px;color:#000;text-align:center;line-height:19px;font-weight:bold;">1550</div>
<div style="left:340px;top:580px;width:30px;height:18px;font-size:12px;color:#000;text-align:right;line-height:19px;">92</div>
<div class="b" style="left:373px;top:580px;width:47px;height:18px;font-size:14px;color:#c80000;text-align:right;line-height:19px;font-weight:bold;font-family:'Liberation Serif',serif;">0.0002</div>
<div class="b" style="left:424px;top:580px;width:46px;height:18px;font-size:14px;color:#0000c8;text-align:right;line-height:19px;font-weight:bold;font-family:'Liberation Serif',serif;">0.0007</div>
<div style="left:474px;top:580px;width:31px;height:18px;font-size:12px;color:#000;text-align:right;line-height:19px;">90</div>
<div style="left:508px;top:580px;width:54px;height:18px;font-size:12px;color:#000;text-align:right;line-height:19px;">0.0006</div>
<div style="left:565px;top:580px;width:47px;height:18px;font-size:12px;color:#000;text-align:right;line-height:19px;">1</div>
<div style="left:14px;top:598px;width:45px;height:18px;font-size:12px;color:#000;text-align:right;line-height:19px;">102</div>
<div style="left:62px;top:598px;width:55px;height:18px;font-size:12px;color:#000;text-align:right;line-height:19px;">0.016</div>
<div class="b" style="left:288px;top:598px;width:52px;height:18px;font-size:12px;color:#000;text-align:center;line-height:19px;font-weight:bold;">1560</div>
<div style="left:340px;top:598px;width:30px;height:18px;font-size:12px;color:#000;text-align:right;line-height:19px;">95</div>
<div class="b" style="left:373px;top:598px;width:47px;height:18px;font-size:14px;color:#c80000;text-align:right;line-height:19px;font-weight:bold;font-family:'Liberation Serif',serif;">0.0011</div>
<div class="b" style="left:424px;top:598px;width:46px;height:18px;font-size:14px;color:#0000c8;text-align:right;line-height:19px;font-weight:bold;font-family:'Liberation Serif',serif;">0.0018</div>
<div style="left:474px;top:598px;width:31px;height:18px;font-size:12px;color:#000;text-align:right;line-height:19px;">157</div>
<div style="left:508px;top:598px;width:54px;height:18px;font-size:12px;color:#000;text-align:right;line-height:19px;">0.0017</div>
<div style="left:565px;top:598px;width:47px;height:18px;font-size:12px;color:#000;text-align:right;line-height:19px;">2</div>
<div style="left:14px;top:616px;width:45px;height:18px;font-size:12px;color:#000;text-align:right;line-height:19px;">5</div>
<div style="left:62px;top:616px;width:55px;height:18px;font-size:12px;color:#000;text-align:right;line-height:19px;">0.0082</div>
<div style="left:120px;top:616px;width:31px;height:18px;font-size:12px;color:#000;text-align:right;line-height:19px;">15</div>
<div class="b" style="left:154px;top:616px;width:46px;height:18px;font-size:14px;color:#c80000;text-align:right;line-height:19px;font-weight:bold;font-family:'Liberation Serif',serif;">0.0066</div>
<div class="b" style="left:204px;top:616px;width:46px;height:18px;font-size:14px;color:#0000c8;text-align:right;line-height:19px;font-weight:bold;font-family:'Liberation Serif',serif;">0.0074</div>
<div style="left:254px;top:616px;width:31px;height:18px;font-size:12px;color:#000;text-align:right;line-height:19px;">83</div>
<div class="b" style="left:288px;top:616px;width:52px;height:18px;font-size:12px;color:#000;text-align:center;line-height:19px;font-weight:bold;">1570</div>
<div style="left:340px;top:616px;width:30px;height:18px;font-size:12px;color:#000;text-align:right;line-height:19px;">5</div>
<div class="b" style="left:373px;top:616px;width:47px;height:18px;font-size:14px;color:#c80000;text-align:right;line-height:19px;font-weight:bold;font-family:'Liberation Serif',serif;">0.0036</div>
<div class="b" style="left:424px;top:616px;width:46px;height:18px;font-size:14px;color:#0000c8;text-align:right;line-height:19px;font-weight:bold;font-family:'Liberation Serif',serif;">0.0044</div>
<div style="left:474px;top:616px;width:31px;height:18px;font-size:12px;color:#000;text-align:right;line-height:19px;">135</div>
<div style="left:508px;top:616px;width:54px;height:18px;font-size:12px;color:#000;text-align:right;line-height:19px;">0.0035</div>
<div style="left:565px;top:616px;width:47px;height:18px;font-size:12px;color:#000;text-align:right;line-height:19px;">12</div>
<div style="left:14px;top:634px;width:45px;height:18px;font-size:12px;color:#000;text-align:right;line-height:19px;">2</div>
<div style="left:62px;top:634px;width:55px;height:18px;font-size:12px;color:#000;text-align:right;line-height:19px;">0.002</div>
<div style="left:120px;top:634px;width:31px;height:18px;font-size:12px;color:#000;text-align:right;line-height:19px;">95</div>
<div class="b" style="left:154px;top:634px;width:46px;height:18px;font-size:14px;color:#c80000;text-align:right;line-height:19px;font-weight:bold;font-family:'Liberation Serif',serif;">0.0021</div>
<div class="b" style="left:204px;top:634px;width:46px;height:18px;font-size:14px;color:#0000c8;text-align:right;line-height:19px;font-weight:bold;font-family:'Liberation Serif',serif;">0.0028</div>
<div style="left:254px;top:634px;width:31px;height:18px;font-size:12px;color:#000;text-align:right;line-height:19px;">83</div>
<div class="b" style="left:288px;top:634px;width:52px;height:18px;font-size:12px;color:#000;text-align:center;line-height:19px;font-weight:bold;">1580</div>
<div style="left:340px;top:634px;width:30px;height:18px;font-size:12px;color:#000;text-align:right;line-height:19px;">37</div>
<div class="b" style="left:373px;top:634px;width:47px;height:18px;font-size:14px;color:#c80000;text-align:right;line-height:19px;font-weight:bold;font-family:'Liberation Serif',serif;">0.0084</div>
<div class="b" style="left:424px;top:634px;width:46px;height:18px;font-size:14px;color:#0000c8;text-align:right;line-height:19px;font-weight:bold;font-family:'Liberation Serif',serif;">0.0102</div>
<div style="left:474px;top:634px;width:31px;height:18px;font-size:12px;color:#000;text-align:right;line-height:19px;">30</div>
<div style="left:508px;top:634px;width:54px;height:18px;font-size:12px;color:#000;text-align:right;line-height:19px;">0.0079</div>
<div style="left:565px;top:634px;width:47px;height:18px;font-size:12px;color:#000;text-align:right;line-height:19px;">44</div>
<div style="left:14px;top:652px;width:45px;height:18px;font-size:12px;color:#000;text-align:right;line-height:19px;">46</div>
<div style="left:62px;top:652px;width:55px;height:18px;font-size:12px;color:#000;text-align:right;line-height:19px;">0.001</div>
<div style="left:120px;top:652px;width:31px;height:18px;font-size:12px;color:#000;text-align:right;line-height:19px;">88</div>
<div class="b" style="left:154px;top:652px;width:46px;height:18px;font-size:14px;color:#c80000;text-align:right;line-height:19px;font-weight:bold;font-family:'Liberation Serif',serif;">0.0005</div>
<div class="b" style="left:204px;top:652px;width:46px;height:18px;font-size:14px;color:#0000c8;text-align:right;line-height:19px;font-weight:bold;font-family:'Liberation Serif',serif;">0.001</div>
<div style="left:254px;top:652px;width:31px;height:18px;font-size:12px;color:#000;text-align:right;line-height:19px;">42</div>
<div class="b" style="left:288px;top:652px;width:52px;height:18px;font-size:12px;color:#000;text-align:center;line-height:19px;font-weight:bold;">1590</div>
<div style="left:14px;top:670px;width:45px;height:18px;font-size:12px;color:#000;text-align:right;line-height:19px;">82</div>
<div style="left:62px;top:670px;width:55px;height:18px;font-size:12px;color:#000;text-align:right;line-height:19px;">0.0005</div>
<div style="left:120px;top:670px;width:31px;height:18px;font-size:12px;color:#000;text-align:right;line-height:19px;">32</div>
<div class="b" style="left:154px;top:670px;width:46px;height:18px;font-size:14px;color:#c80000;text-align:right;line-height:19px;font-weight:bold;font-family:'Liberation Serif',serif;">0.0002</div>
<div class="b" style="left:204px;top:670px;width:46px;height:18px;font-size:14px;color:#0000c8;text-align:right;line-height:19px;font-weight:bold;font-family:'Liberation Serif',serif;">0.0005</div>
<div style="left:254px;top:670px;width:31px;height:18px;font-size:12px;color:#000;text-align:right;line-height:19px;">42</div>
<div class="b" style="left:288px;top:670px;width:52px;height:18px;font-size:12px;color:#000;text-align:center;line-height:19px;font-weight:bold;">1600</div>
<div class="b" style="left:204px;top:688px;width:46px;height:18px;font-size:14px;color:#0000c8;text-align:right;line-height:19px;font-weight:bold;font-family:'Liberation Serif',serif;">0.0004</div>
<div style="left:254px;top:688px;width:31px;height:18px;font-size:12px;color:#000;text-align:right;line-height:19px;">3</div>
<div class="b" style="left:288px;top:688px;width:52px;height:18px;font-size:12px;color:#000;text-align:center;line-height:19px;font-weight:bold;">1610</div>
<div style="left:14px;top:706px;width:45px;height:18px;font-size:12px;color:#000;text-align:right;line-height:19px;">2</div>
<div style="left:62px;top:706px;width:55px;height:18px;font-size:12px;color:#000;text-align:right;line-height:19px;">0.0002</div>
<div class="b" style="left:204px;top:706px;width:46px;height:18px;font-size:14px;color:#0000c8;text-align:right;line-height:19px;font-weight:bold;font-family:'Liberation Serif',serif;">0.0003</div>
<div style="left:254px;top:706px;width:31px;height:18px;font-size:12px;color:#000;text-align:right;line-height:19px;">10</div>
<div class="b" style="left:288px;top:706px;width:52px;height:18px;font-size:12px;color:#000;text-align:center;line-height:19px;font-weight:bold;">1620</div>
<div style="left:615px;top:364px;width:1px;height:356px;background:#000;"></div>
<div style="left:641px;top:364px;width:17px;height:356px;background:linear-gradient(90deg,#f3f1ec,#fefefb);"></div>
<div style="left:642px;top:365px;width:15px;height:15px;background:linear-gradient(90deg,#cfdcfd,#bccdfa 60%,#b1c4f6);border:1px solid #fff;border-radius:3px;box-shadow:inset -1px -1px 0 0 #a3b8ee;"></div>
<svg style="position:absolute;left:644px;top:368px" width="10" height="8"><path d="M1 6L5 2L9 6" stroke="#4d6185" stroke-width="2.2" fill="none"/></svg>
<div style="left:642px;top:704px;width:15px;height:15px;background:linear-gradient(90deg,#cfdcfd,#bccdfa 60%,#b1c4f6);border:1px solid #fff;border-radius:3px;box-shadow:inset -1px -1px 0 0 #a3b8ee;"></div>
<svg style="position:absolute;left:644px;top:707px" width="10" height="8"><path d="M1 2L5 6L9 2" stroke="#4d6185" stroke-width="2.2" fill="none"/></svg>
<div style="left:642px;top:381px;width:15px;height:272px;background:linear-gradient(90deg,#cfdcfd,#bccdfa 60%,#b1c4f6);border:1px solid #fff;border-radius:3px;box-shadow:inset -1px -1px 0 0 #a3b8ee;"></div>
<div style="left:645px;top:513px;width:7px;height:1px;background:#eef3fe;"></div>
<div style="left:646px;top:514px;width:7px;height:1px;background:#8ca4dc;"></div>
<div style="left:645px;top:515px;width:7px;height:1px;background:#eef3fe;"></div>
<div style="left:646px;top:516px;width:7px;height:1px;background:#8ca4dc;"></div>
<div style="left:645px;top:517px;width:7px;height:1px;background:#eef3fe;"></div>
<div style="left:646px;top:518px;width:7px;height:1px;background:#8ca4dc;"></div>
<div style="left:645px;top:519px;width:7px;height:1px;background:#eef3fe;"></div>
<div style="left:646px;top:520px;width:7px;height:1px;background:#8ca4dc;"></div>
<div style="left:412px;top:273px;width:160px;height:122px;background:#fff;border:1px solid #000;"></div>
<div style="left:413px;top:274px;width:142px;height:15px;background:#316ac5;outline:1px dotted #e8c87a;outline-offset:-1px;"></div>
<div style="left:415px;top:275px;width:140px;height:15px;font-size:12px;color:#fff;text-align:left;line-height:15px;">British Pound Options</div>
<div style="left:415px;top:290px;width:140px;height:15px;font-size:12px;color:#000;text-align:left;line-height:15px;">Canadian Dollar Options</div>
<div style="left:415px;top:305px;width:140px;height:15px;font-size:12px;color:#000;text-align:left;line-height:15px;">Comex Gold Options</div>
<div style="left:415px;top:320px;width:140px;height:15px;font-size:12px;color:#000;text-align:left;line-height:15px;">Comex Silver Options</div>
<div style="left:415px;top:335px;width:140px;height:15px;font-size:12px;color:#000;text-align:left;line-height:15px;">Crude Oil Options</div>
<div style="left:415px;top:350px;width:140px;height:15px;font-size:12px;color:#000;text-align:left;line-height:15px;">Euro Options</div>
<div style="left:415px;top:365px;width:140px;height:15px;font-size:12px;color:#000;text-align:left;line-height:15px;">Japanese Yen Options</div>
<div style="left:415px;top:380px;width:140px;height:15px;font-size:12px;color:#000;text-align:left;line-height:15px;">Mini S&amp;P Options</div>
<div style="left:555px;top:274px;width:16px;height:120px;background:linear-gradient(90deg,#f3f1ec,#fefefb);"></div>
<div style="left:556px;top:275px;width:14px;height:14px;background:linear-gradient(90deg,#cfdcfd,#bccdfa 60%,#b1c4f6);border:1px solid #fff;border-radius:3px;box-shadow:inset -1px -1px 0 0 #a3b8ee;"></div>
<svg style="position:absolute;left:558px;top:278px" width="10" height="8"><path d="M1 6L5 2L9 6" stroke="#4d6185" stroke-width="2.2" fill="none"/></svg>
<div style="left:556px;top:379px;width:14px;height:14px;background:linear-gradient(90deg,#cfdcfd,#bccdfa 60%,#b1c4f6);border:1px solid #fff;border-radius:3px;box-shadow:inset -1px -1px 0 0 #a3b8ee;"></div>
<svg style="position:absolute;left:558px;top:382px" width="10" height="8"><path d="M1 2L5 6L9 2" stroke="#4d6185" stroke-width="2.2" fill="none"/></svg>
<div style="left:556px;top:302px;width:14px;height:73px;background:linear-gradient(90deg,#cfdcfd,#bccdfa 60%,#b1c4f6);border:1px solid #fff;border-radius:3px;box-shadow:inset -1px -1px 0 0 #a3b8ee;"></div>
<div style="left:559px;top:334px;width:7px;height:1px;background:#eef3fe;"></div>
<div style="left:560px;top:335px;width:7px;height:1px;background:#8ca4dc;"></div>
<div style="left:559px;top:336px;width:7px;height:1px;background:#eef3fe;"></div>
<div style="left:560px;top:337px;width:7px;height:1px;background:#8ca4dc;"></div>
<div style="left:559px;top:338px;width:7px;height:1px;background:#eef3fe;"></div>
<div style="left:560px;top:339px;width:7px;height:1px;background:#8ca4dc;"></div>
<div style="left:559px;top:340px;width:7px;height:1px;background:#eef3fe;"></div>
<div style="left:560px;top:341px;width:7px;height:1px;background:#8ca4dc;"></div>
<div style="left:668px;top:52px;width:352px;height:154px;border-top:1px solid #fff;border-left:1px solid #fff;border-right:1px solid #000;border-bottom:1px solid #000;box-shadow:inset -1px -1px 0 #aca899;"></div>
<div style="left:668px;top:32px;width:42px;height:21px;background:#ece9d8;border-left:1px solid #fff;border-top:1px solid #fff;border-radius:3px 3px 0 0;box-shadow:inset -1px 0 0 #3e3d36, inset -2px 0 0 #96937f;"></div>
<div style="left:668px;top:34px;width:41px;height:20px;font-size:12px;color:#000;text-align:center;line-height:20px;">入盤</div>
<div style="left:748px;top:30px;width:22px;height:22px;background:#7cfc00;border:1px solid #000;"></div>
<div class="b" style="left:748px;top:30px;width:22px;height:22px;font-size:13px;color:#2a6400;text-align:center;line-height:22px;font-weight:bold;">W</div>
<div style="left:780px;top:30px;width:22px;height:22px;background:#7cfc00;border:1px solid #000;"></div>
<div class="b" style="left:780px;top:30px;width:22px;height:22px;font-size:13px;color:#2a6400;text-align:center;line-height:22px;font-weight:bold;">P</div>
<div style="left:812px;top:30px;width:22px;height:22px;background:#ff0000;border:1px solid #000;"></div>
<div class="b" style="left:812px;top:30px;width:22px;height:22px;font-size:13px;color:#8a0000;text-align:center;line-height:22px;font-weight:bold;">O</div>
<svg style="position:absolute;left:844px;top:30px" width="22" height="22" viewBox="844 30 22 22">
<defs><linearGradient id="ck" x1="0" y1="0" x2="0" y2="1"><stop offset="0" stop-color="#fff"/><stop offset=".55" stop-color="#e6f0fb"/><stop offset="1" stop-color="#b6d0ee"/></linearGradient>
<linearGradient id="cr" x1="0" y1="0" x2="1" y2="1"><stop offset="0" stop-color="#f6c6a4"/><stop offset="1" stop-color="#cc6c34"/></linearGradient></defs>
<circle cx="855.200" cy="41" r="10.300" fill="url(#cr)"/><circle cx="855.200" cy="41" r="8.500" fill="url(#ck)" stroke="#e8b090" stroke-width=".5"/>
<path d="M850 35.300L853.200 41.500L860 36.200" stroke="#2238a8" stroke-width="1.200" fill="none"/>
<path d="M853.200 41.500V45.500" stroke="#e89020" stroke-width="1"/>
<circle cx="855.200" cy="34" r=".7" fill="#d8a0a0"/><circle cx="855.200" cy="48" r=".7" fill="#e06060"/><circle cx="848.300" cy="41" r=".7" fill="#e06060"/><circle cx="862" cy="41" r=".7" fill="#e06060"/>
</svg>
<div style="left:916px;top:32px;width:103px;height:19px;background:#ffff80;border-right:1px solid #000;border-bottom:1px solid #000;border-top:1px solid #ffffc8;border-left:1px solid #ffffc8;"></div>
<div style="left:916px;top:34px;width:102px;height:18px;font-size:12px;color:#000;text-align:center;line-height:18px;">重整交易</div>
<div style="left:678px;top:60px;width:40px;height:18px;font-size:12px;color:#000;text-align:left;line-height:18px;">合約:</div>
<div style="left:678px;top:88px;width:40px;height:18px;font-size:12px;color:#000;text-align:left;line-height:18px;">價格</div>
<div style="left:678px;top:118px;width:40px;height:18px;font-size:12px;color:#000;text-align:left;line-height:18px;">數量</div>
<div style="left:732px;top:60px;width:104px;height:22px;background:#fff;border:1px solid;border-color:#aca899 #fff #fff #aca899;box-shadow:inset 1px 1px 0 #716f64, inset -1px -1px 0 #ece9d8;"><span class="b" style="position:absolute;left:2px;top:0;line-height:21px;font-size:13px;font-weight:bold">HSIG2</span></div>
<div style="left:837px;top:59px;width:23px;height:23px;background:#ece9d8;border:1px solid;border-color:#fff #716f64 #716f64 #fff;box-shadow:inset -1px -1px 0 #aca899, inset 1px 1px 0 #f1efe2;font-size:12px;text-align:center;line-height:21px;">找</div>
<div style="left:748px;top:89px;width:88px;height:22px;background:#fff;border:1px solid;border-color:#aca899 #fff #fff #aca899;box-shadow:inset 1px 1px 0 #716f64, inset -1px -1px 0 #ece9d8;"><span class="b" style="position:absolute;left:2px;top:0;line-height:21px;font-size:13px;font-weight:bold">20366</span></div>
<div style="left:748px;top:119px;width:88px;height:22px;background:#fff;border:1px solid;border-color:#aca899 #fff #fff #aca899;box-shadow:inset 1px 1px 0 #716f64, inset -1px -1px 0 #ece9d8;"><span class="b" style="position:absolute;left:2px;top:0;line-height:21px;font-size:13px;font-weight:bold">1</span></div>
<div style="left:837px;top:82px;width:23px;height:16px;background:#ece9d8;border:1px solid;border-color:#fff #716f64 #716f64 #fff;box-shadow:inset -1px -1px 0 #aca899, inset 1px 1px 0 #f1efe2;font-size:12px;text-align:center;line-height:14px;"></div>
<svg style="position:absolute;left:845px;top:88px" width="7" height="4" shape-rendering="crispEdges"><path d="M0 4H7L3.5 0Z" fill="#000"/></svg>
<div style="left:837px;top:98px;width:23px;height:16px;background:#ece9d8;border:1px solid;border-color:#fff #716f64 #716f64 #fff;box-shadow:inset -1px -1px 0 #aca899, inset 1px 1px 0 #f1efe2;font-size:12px;text-align:center;line-height:14px;"></div>
<svg style="position:absolute;left:845px;top:104px" width="7" height="4" shape-rendering="crispEdges"><path d="M0 0H7L3.5 4Z" fill="#000"/></svg>
<div style="left:837px;top:114px;width:23px;height:16px;background:#ece9d8;border:1px solid;border-color:#fff #716f64 #716f64 #fff;box-shadow:inset -1px -1px 0 #aca899, inset 1px 1px 0 #f1efe2;font-size:12px;text-align:center;line-height:14px;"></div>
<svg style="position:absolute;left:845px;top:120px" width="7" height="4" shape-rendering="crispEdges"><path d="M0 4H7L3.5 0Z" fill="#000"/></svg>
<div style="left:837px;top:130px;width:23px;height:16px;background:#ece9d8;border:1px solid;border-color:#fff #716f64 #716f64 #fff;box-shadow:inset -1px -1px 0 #aca899, inset 1px 1px 0 #f1efe2;font-size:12px;text-align:center;line-height:14px;"></div>
<svg style="position:absolute;left:845px;top:136px" width="7" height="4" shape-rendering="crispEdges"><path d="M0 0H7L3.5 4Z" fill="#000"/></svg>
<div style="left:869px;top:64px;width:40px;height:18px;font-size:12px;color:#000;text-align:left;line-height:18px;">戶口</div>
<div style="left:902px;top:62px;width:88px;height:23px;background:#fff;border:1px solid;border-color:#aca899 #fff #fff #aca899;box-shadow:inset 1px 1px 0 #716f64, inset -1px -1px 0 #ece9d8;"><span style="position:absolute;left:3px;top:1px;line-height:20px;font-size:12px"></span></div>
<div style="left:969px;top:64px;width:19px;height:19px;background:#ece9d8;border:1px solid;border-color:#fff #716f64 #716f64 #fff;box-shadow:inset -1px -1px 0 #aca899, inset 1px 1px 0 #f1efe2;font-size:12px;text-align:center;line-height:17px;"></div>
<svg style="position:absolute;left:975px;top:72px" width="7" height="4" shape-rendering="crispEdges"><path d="M0 0H7L3.5 4Z" fill="#000"/></svg>
<div style="left:996px;top:64px;width:19px;height:20px;background:#ece9d8;border:1px solid;border-color:#fff #716f64 #716f64 #fff;box-shadow:inset -1px -1px 0 #aca899, inset 1px 1px 0 #f1efe2;font-size:12px;text-align:center;line-height:18px;">找</div>
<div style="left:869px;top:89px;width:40px;height:18px;font-size:12px;color:#000;text-align:left;line-height:18px;">名稱:</div>
<div style="left:918px;top:89px;width:40px;height:18px;font-size:12px;color:#000;text-align:left;line-height:18px;">---</div>
<div style="left:876px;top:111px;width:13px;height:13px;background:#fff;border:1px solid;border-color:#aca899 #fff #fff #aca899;box-shadow:inset 1px 1px 0 #716f64, inset -1px -1px 0 #ece9d8;"></div>
<div style="left:893px;top:109px;width:60px;height:18px;font-size:12px;color:#000;text-align:left;line-height:18px;">漲價點數</div>
<div class="b" style="left:960px;top:109px;width:20px;height:18px;font-size:12px;color:#000;text-align:center;line-height:18px;font-weight:bold;">0</div>
<div style="left:876px;top:135px;width:13px;height:13px;background:#fff;border:1px solid;border-color:#aca899 #fff #fff #aca899;box-shadow:inset 1px 1px 0 #716f64, inset -1px -1px 0 #ece9d8;"></div>
<div style="left:893px;top:133px;width:90px;height:18px;font-size:12px;color:#000;text-align:left;line-height:18px;">競價盤(AO)</div>
<div style="left:988px;top:134px;width:17px;height:16px;background:#ffffc8;border-right:2px solid #000;border-bottom:2px solid #000;border-top:1px solid #fff;border-left:1px solid #fff;"></div>
<div style="left:992px;top:140px;width:8px;height:2px;background:#f00;"></div>
<div style="left:995px;top:137px;width:2px;height:8px;background:#f00;"></div>
<div style="left:676px;top:158px;width:136px;height:40px;background:#ece9d8;border:1px solid;border-color:#fff #716f64 #716f64 #fff;box-shadow:inset -1px -1px 0 #aca899, inset 1px 1px 0 #f1efe2;font-size:27px;text-align:center;line-height:38px;"><span class="sf">買入</span></div>
<div style="left:868px;top:158px;width:137px;height:40px;background:#ece9d8;border:1px solid;border-color:#fff #716f64 #716f64 #fff;box-shadow:inset -1px -1px 0 #aca899, inset 1px 1px 0 #f1efe2;font-size:27px;text-align:center;line-height:38px;"><span class="sf">沽出</span></div>
<div style="left:668px;top:228px;width:352px;height:503px;border-top:1px solid #fff;border-left:1px solid #fff;border-right:1px solid #716f64;border-bottom:1px solid #fff;box-shadow:inset -1px 0 0 #aca899;"></div>
<div style="left:742px;top:208px;width:68px;height:20px;background:#ece9d8;border-left:1px solid #fff;border-top:1px solid #fff;border-radius:3px 3px 0 0;box-shadow:inset -1px 0 0 #3e3d36, inset -2px 0 0 #96937f;"></div>
<div style="left:742px;top:210px;width:67px;height:19px;font-size:12px;color:#000;text-align:center;line-height:19px;">外期</div>
<div style="left:669px;top:206px;width:73px;height:23px;background:#ece9d8;border-left:1px solid #fff;border-top:1px solid #fff;border-radius:3px 3px 0 0;box-shadow:inset -1px 0 0 #3e3d36, inset -2px 0 0 #96937f;"></div>
<div style="left:669px;top:207px;width:72px;height:22px;font-size:12px;color:#000;text-align:center;line-height:22px;">港期</div>
<div style="left:675px;top:266px;width:341px;height:207px;border-top:1px solid #fff;border-left:1px solid #fff;border-right:1px solid #000;border-bottom:1px solid #000;box-shadow:inset -1px -1px 0 #aca899;"></div>
<div style="left:728px;top:249px;width:60px;height:18px;background:#ece9d8;border-left:1px solid #fff;border-top:1px solid #fff;border-radius:3px 3px 0 0;box-shadow:inset -1px 0 0 #3e3d36, inset -2px 0 0 #96937f;"></div>
<div style="left:728px;top:251px;width:59px;height:17px;font-size:12px;color:#000;text-align:center;line-height:17px;">等待處理</div>
<div style="left:788px;top:249px;width:62px;height:18px;background:#ece9d8;border-left:1px solid #fff;border-top:1px solid #fff;border-radius:3px 3px 0 0;box-shadow:inset -1px 0 0 #3e3d36, inset -2px 0 0 #96937f;"></div>
<div style="left:788px;top:251px;width:61px;height:17px;font-size:12px;color:#000;text-align:center;line-height:17px;">需要審批</div>
<div style="left:850px;top:249px;width:50px;height:18px;background:#ece9d8;border-left:1px solid #fff;border-top:1px solid #fff;border-radius:3px 3px 0 0;box-shadow:inset -1px 0 0 #3e3d36, inset -2px 0 0 #96937f;"></div>
<div style="left:850px;top:251px;width:49px;height:17px;font-size:12px;color:#000;text-align:center;line-height:17px;">止蝕盤</div>
<div style="left:675px;top:247px;width:53px;height:20px;background:#ece9d8;border-left:1px solid #fff;border-top:1px solid #fff;border-radius:3px 3px 0 0;box-shadow:inset -1px 0 0 #3e3d36, inset -2px 0 0 #96937f;"></div>
<div style="left:675px;top:249px;width:52px;height:19px;font-size:12px;color:#000;text-align:center;line-height:19px;">成交中</div>
<div style="left:952px;top:246px;width:64px;height:20px;background:#ece9d8;border:1px solid;border-color:#fff #716f64 #716f64 #fff;box-shadow:inset -1px -1px 0 #aca899, inset 1px 1px 0 #f1efe2;font-size:12px;text-align:center;line-height:18px;">取消</div>
<div style="left:676px;top:271px;width:335px;height:198px;border:1px solid;border-color:#716f64 #fff #fff #716f64;"></div>
<div style="left:677px;top:272px;width:333px;height:179px;background:#808080;"></div>
<div style="left:677px;top:272px;width:333px;height:18px;background:#ece9d8;"></div>
<div style="left:677px;top:272px;width:86px;height:18px;border-left:1px solid #fff;border-top:1px solid #fff;border-right:1px solid #aca899;border-bottom:1px solid #aca899;"></div>
<div style="left:680px;top:272px;width:83px;height:18px;font-size:12px;color:#000;text-align:left;line-height:19px;">合約</div>
<div style="left:763px;top:272px;width:45px;height:18px;border-left:1px solid #fff;border-top:1px solid #fff;border-right:1px solid #aca899;border-bottom:1px solid #aca899;"></div>
<div style="left:766px;top:272px;width:42px;height:18px;font-size:12px;color:#000;text-align:left;line-height:19px;">價格</div>
<div style="left:808px;top:272px;width:32px;height:18px;border-left:1px solid #fff;border-top:1px solid #fff;border-right:1px solid #aca899;border-bottom:1px solid #aca899;"></div>
<div style="left:811px;top:272px;width:29px;height:18px;font-size:12px;color:#000;text-align:left;line-height:19px;">買量</div>
<div style="left:840px;top:272px;width:33px;height:18px;border-left:1px solid #fff;border-top:1px solid #fff;border-right:1px solid #aca899;border-bottom:1px solid #aca899;"></div>
<div style="left:843px;top:272px;width:30px;height:18px;font-size:12px;color:#000;text-align:left;line-height:19px;">沽量</div>
<div style="left:873px;top:272px;width:80px;height:18px;border-left:1px solid #fff;border-top:1px solid #fff;border-right:1px solid #aca899;border-bottom:1px solid #aca899;"></div>
<div style="left:876px;top:272px;width:77px;height:18px;font-size:12px;color:#000;text-align:left;line-height:19px;">戶口</div>
<div style="left:953px;top:272px;width:57px;height:18px;border-left:1px solid #fff;border-top:1px solid #fff;border-right:1px solid #aca899;border-bottom:1px solid #aca899;"></div>
<div style="left:956px;top:272px;width:54px;height:18px;font-size:12px;color:#000;text-align:left;line-height:19px;">狀態</div>
<div style="left:677px;top:289px;width:333px;height:1px;background:#000;"></div>
<div style="left:677px;top:451px;width:333px;height:17px;background:linear-gradient(#f3f1ec,#fefefb);"></div>
<div style="left:678px;top:452px;width:15px;height:15px;background:linear-gradient(#cfdcfd,#bccdfa 60%,#b1c4f6);border:1px solid #fff;border-radius:3px;box-shadow:inset -1px -1px 0 0 #a3b8ee;"></div>
<svg style="position:absolute;left:681px;top:454px" width="8" height="10"><path d="M6 1L2 5L6 9" stroke="#4d6185" stroke-width="2.2" fill="none"/></svg>
<div style="left:994px;top:452px;width:15px;height:15px;background:linear-gradient(#cfdcfd,#bccdfa 60%,#b1c4f6);border:1px solid #fff;border-radius:3px;box-shadow:inset -1px -1px 0 0 #a3b8ee;"></div>
<svg style="position:absolute;left:997px;top:454px" width="8" height="10"><path d="M2 1L6 5L2 9" stroke="#4d6185" stroke-width="2.2" fill="none"/></svg>
<div style="left:694px;top:452px;width:101px;height:15px;background:linear-gradient(#cfdcfd,#bccdfa 60%,#b1c4f6);border:1px solid #fff;border-radius:3px;box-shadow:inset -1px -1px 0 0 #a3b8ee;"></div>
<div style="left:740px;top:455px;width:1px;height:7px;background:#eef3fe;"></div>
<div style="left:741px;top:456px;width:1px;height:7px;background:#8ca4dc;"></div>
<div style="left:742px;top:455px;width:1px;height:7px;background:#eef3fe;"></div>
<div style="left:743px;top:456px;width:1px;height:7px;background:#8ca4dc;"></div>
<div style="left:744px;top:455px;width:1px;height:7px;background:#eef3fe;"></div>
<div style="left:745px;top:456px;width:1px;height:7px;background:#8ca4dc;"></div>
<div style="left:746px;top:455px;width:1px;height:7px;background:#eef3fe;"></div>
<div style="left:747px;top:456px;width:1px;height:7px;background:#8ca4dc;"></div>
<div style="left:675px;top:498px;width:341px;height:232px;border-top:1px solid #fff;border-left:1px solid #fff;border-right:1px solid #000;border-bottom:1px solid #000;box-shadow:inset -1px -1px 0 #aca899;"></div>
<div style="left:675px;top:478px;width:42px;height:21px;background:#ece9d8;border-left:1px solid #fff;border-top:1px solid #fff;border-radius:3px 3px 0 0;box-shadow:inset -1px 0 0 #3e3d36, inset -2px 0 0 #96937f;"></div>
<div style="left:675px;top:480px;width:41px;height:20px;font-size:12px;color:#000;text-align:center;line-height:20px;">成交</div>
<div style="left:720px;top:478px;width:56px;height:20px;background:#fff;border:1px solid;border-color:#aca899 #fff #fff #aca899;box-shadow:inset 1px 1px 0 #716f64, inset -1px -1px 0 #ece9d8;"></div>
<div style="left:784px;top:479px;width:13px;height:13px;background:#fff;border:1px solid;border-color:#aca899 #fff #fff #aca899;box-shadow:inset 1px 1px 0 #716f64, inset -1px -1px 0 #ece9d8;"></div>
<div style="left:801px;top:477px;width:30px;height:18px;font-size:12px;color:#000;text-align:left;line-height:18px;">戶口</div>
<div style="left:832px;top:479px;width:13px;height:13px;background:#fff;border:1px solid;border-color:#aca899 #fff #fff #aca899;box-shadow:inset 1px 1px 0 #716f64, inset -1px -1px 0 #ece9d8;"></div>
<div style="left:849px;top:477px;width:60px;height:18px;font-size:12px;color:#000;text-align:left;line-height:18px;">我的交易</div>
<div style="left:904px;top:479px;width:13px;height:13px;background:#fff;border:1px solid;border-color:#aca899 #fff #fff #aca899;box-shadow:inset 1px 1px 0 #716f64, inset -1px -1px 0 #ece9d8;"></div>
<div style="left:922px;top:477px;width:50px;height:18px;font-size:12px;color:#000;text-align:left;line-height:18px;">已成交</div>
<div style="left:976px;top:477px;width:40px;height:21px;background:#ece9d8;border:1px solid;border-color:#fff #716f64 #716f64 #fff;box-shadow:inset -1px -1px 0 #aca899, inset 1px 1px 0 #f1efe2;font-size:12px;text-align:center;line-height:19px;">列 存</div>
<div style="left:676px;top:503px;width:335px;height:222px;border:1px solid;border-color:#716f64 #fff #fff #716f64;"></div>
<div style="left:677px;top:504px;width:333px;height:203px;background:#808080;"></div>
<div style="left:677px;top:504px;width:333px;height:18px;background:#ece9d8;"></div>
<div style="left:677px;top:504px;width:85px;height:18px;border-left:1px solid #fff;border-top:1px solid #fff;border-right:1px solid #aca899;border-bottom:1px solid #aca899;"></div>
<div style="left:680px;top:504px;width:82px;height:18px;font-size:12px;color:#000;text-align:left;line-height:19px;">合約</div>
<div style="left:762px;top:504px;width:45px;height:18px;border-left:1px solid #fff;border-top:1px solid #fff;border-right:1px solid #aca899;border-bottom:1px solid #aca899;"></div>
<div style="left:765px;top:504px;width:42px;height:18px;font-size:12px;color:#000;text-align:left;line-height:19px;">成交價</div>
<div style="left:807px;top:504px;width:45px;height:18px;border-left:1px solid #fff;border-top:1px solid #fff;border-right:1px solid #aca899;border-bottom:1px solid #aca899;"></div>
<div style="left:810px;top:504px;width:42px;height:18px;font-size:12px;color:#000;text-align:left;line-height:19px;">落盤價</div>
<div style="left:852px;top:504px;width:33px;height:18px;border-left:1px solid #fff;border-top:1px solid #fff;border-right:1px solid #aca899;border-bottom:1px solid #aca899;"></div>
<div style="left:855px;top:504px;width:30px;height:18px;font-size:12px;color:#000;text-align:left;line-height:19px;">買量</div>
<div style="left:885px;top:504px;width:33px;height:18px;border-left:1px solid #fff;border-top:1px solid #fff;border-right:1px solid #aca899;border-bottom:1px solid #aca899;"></div>
<div style="left:888px;top:504px;width:30px;height:18px;font-size:12px;color:#000;text-align:left;line-height:19px;">沽量</div>
<div style="left:918px;top:504px;width:72px;height:18px;border-left:1px solid #fff;border-top:1px solid #fff;border-right:1px solid #aca899;border-bottom:1px solid #aca899;"></div>
<div style="left:921px;top:504px;width:69px;height:18px;font-size:12px;color:#000;text-align:left;line-height:19px;">戶口</div>
<div style="left:990px;top:504px;width:20px;height:18px;border-left:1px solid #fff;border-top:1px solid #fff;border-right:1px solid #aca899;border-bottom:1px solid #aca899;"></div>
<div style="left:993px;top:504px;width:17px;height:18px;font-size:12px;color:#000;text-align:left;line-height:19px;">客戶</div>
<div style="left:677px;top:521px;width:333px;height:1px;background:#000;"></div>
<div style="left:677px;top:707px;width:333px;height:17px;background:linear-gradient(#f3f1ec,#fefefb);"></div>
<div style="left:678px;top:708px;width:15px;height:15px;background:linear-gradient(#cfdcfd,#bccdfa 60%,#b1c4f6);border:1px solid #fff;border-radius:3px;box-shadow:inset -1px -1px 0 0 #a3b8ee;"></div>
<svg style="position:absolute;left:681px;top:710px" width="8" height="10"><path d="M6 1L2 5L6 9" stroke="#4d6185" stroke-width="2.2" fill="none"/></svg>
<div style="left:994px;top:708px;width:15px;height:15px;background:linear-gradient(#cfdcfd,#bccdfa 60%,#b1c4f6);border:1px solid #fff;border-radius:3px;box-shadow:inset -1px -1px 0 0 #a3b8ee;"></div>
<svg style="position:absolute;left:997px;top:710px" width="8" height="10"><path d="M2 1L6 5L2 9" stroke="#4d6185" stroke-width="2.2" fill="none"/></svg>
<div style="left:695px;top:708px;width:78px;height:15px;background:linear-gradient(#cfdcfd,#bccdfa 60%,#b1c4f6);border:1px solid #fff;border-radius:3px;box-shadow:inset -1px -1px 0 0 #a3b8ee;"></div>
<div style="left:730px;top:711px;width:1px;height:7px;background:#eef3fe;"></div>
<div style="left:731px;top:712px;width:1px;height:7px;background:#8ca4dc;"></div>
<div style="left:732px;top:711px;width:1px;height:7px;background:#eef3fe;"></div>
<div style="left:733px;top:712px;width:1px;height:7px;background:#8ca4dc;"></div>
<div style="left:734px;top:711px;width:1px;height:7px;background:#eef3fe;"></div>
<div style="left:735px;top:712px;width:1px;height:7px;background:#8ca4dc;"></div>
<div style="left:736px;top:711px;width:1px;height:7px;background:#eef3fe;"></div>
<div style="left:737px;top:712px;width:1px;height:7px;background:#8ca4dc;"></div>
<div style="left:664px;top:190px;width:1px;height:42px;background:#716f64;"></div>
</body></html>
